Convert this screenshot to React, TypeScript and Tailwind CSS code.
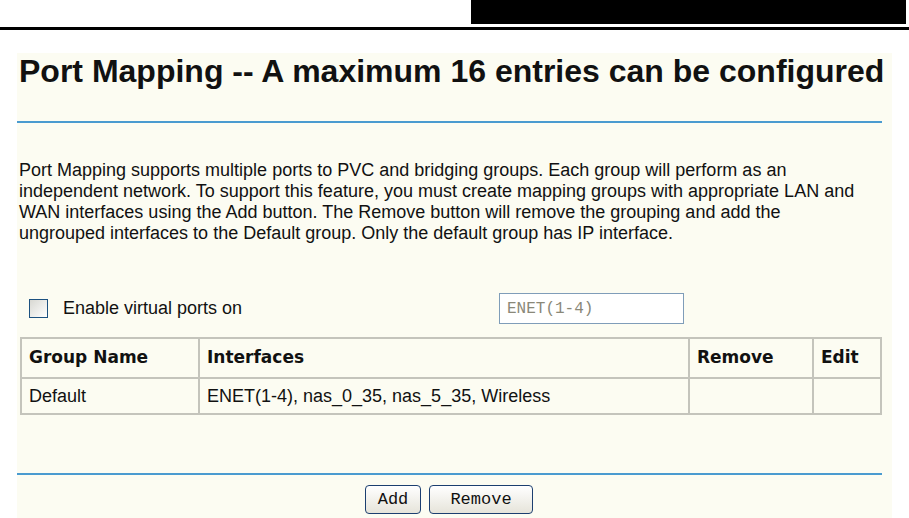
import React from "react";

const thCls = "border-2 border-[#c4c4bc] text-left pl-[7px] text-[17px] font-bold";
const thFont = { fontFamily: '"DejaVu Sans", Verdana, sans-serif' };

export default function App() {
  return (
    <div className="relative w-[909px] h-[518px] overflow-hidden bg-white" style={{ fontFamily: '"Liberation Sans", Arial, sans-serif' }}>
      <div className="flex justify-end h-[24px] pr-[3px]">
        <div className="w-[435px] h-[24px] bg-black" />
      </div>
      <div className="mt-[3px] h-[3px] bg-black" />
      <div className="ml-[17px] mt-[23px] w-[875px] h-[465px] bg-[#fcfcf2] flex flex-col">
        <h1 className="pl-[2px] h-[36px] leading-[36px] text-[32px] font-bold text-[#111] whitespace-nowrap">
          Port Mapping -- A maximum 16 entries can be configured
        </h1>
        <div className="mt-[32px] w-[865px] h-[2px] bg-[#4a9bd0]" />
        <p className="mt-[37px] pl-[2px] text-[18px] leading-[21px] text-[#111] whitespace-nowrap">
          Port Mapping supports multiple ports to PVC and bridging groups. Each group will perform as an
          <br />
          independent network. To support this feature, you must create mapping groups with appropriate LAN and
          <br />
          WAN interfaces using the Add button. The Remove button will remove the grouping and add the
          <br />
          ungrouped interfaces to the Default group. Only the default group has IP interface.
        </p>
        <div className="mt-[49px] flex items-center h-[31px]">
          <div className="w-[482px] flex items-center">
            <div className="ml-[12px] w-[19px] h-[19px] border border-[#1c5180] bg-gradient-to-br from-[#d8d8d2] to-white" />
            <span className="ml-[15px] text-[18px] text-[#111]">Enable virtual ports on</span>
          </div>
          <div className="w-[185px] h-[31px] border border-[#7f9db9] bg-white flex items-center pl-[7px] text-[16px] text-[#8a8878]" style={{ fontFamily: '"Liberation Mono", monospace' }}>
            ENET(1-4)
          </div>
        </div>
        <table className="ml-[3px] mt-[13px] w-[862px] border-collapse text-[#111]">
          <tbody>
            <tr className="h-[40px]">
              <th className={`${thCls} w-[178px]`} style={thFont}>Group Name</th>
              <th className={`${thCls} w-[490px]`} style={thFont}>Interfaces</th>
              <th className={`${thCls} w-[124px]`} style={thFont}>Remove</th>
              <th className={thCls} style={thFont}>Edit</th>
            </tr>
            <tr className="h-[36px] text-[18px]">
              <td className="border-2 border-[#c4c4bc] pl-[7px]">Default</td>
              <td className="border-2 border-[#c4c4bc] pl-[7px]">ENET(1-4), nas_0_35, nas_5_35, Wireless</td>
              <td className="border-2 border-[#c4c4bc]"></td>
              <td className="border-2 border-[#c4c4bc]"></td>
            </tr>
          </tbody>
        </table>
        <div className="mt-[58px] w-[865px] h-[2px] bg-[#4a9bd0]" />
        <div className="mt-[10px] flex gap-[8px] pl-[348px]" style={{ fontFamily: '"Liberation Mono", monospace' }}>
          <button className="w-[56px] h-[29px] rounded-[4px] border border-[#1c3f70] bg-gradient-to-b from-white to-[#e6e4da] text-[17px] text-[#111]">Add</button>
          <button className="w-[104px] h-[29px] rounded-[4px] border border-[#1c3f70] bg-gradient-to-b from-white to-[#e6e4da] text-[17px] text-[#111]">Remove</button>
        </div>
      </div>
    </div>
  );
}
